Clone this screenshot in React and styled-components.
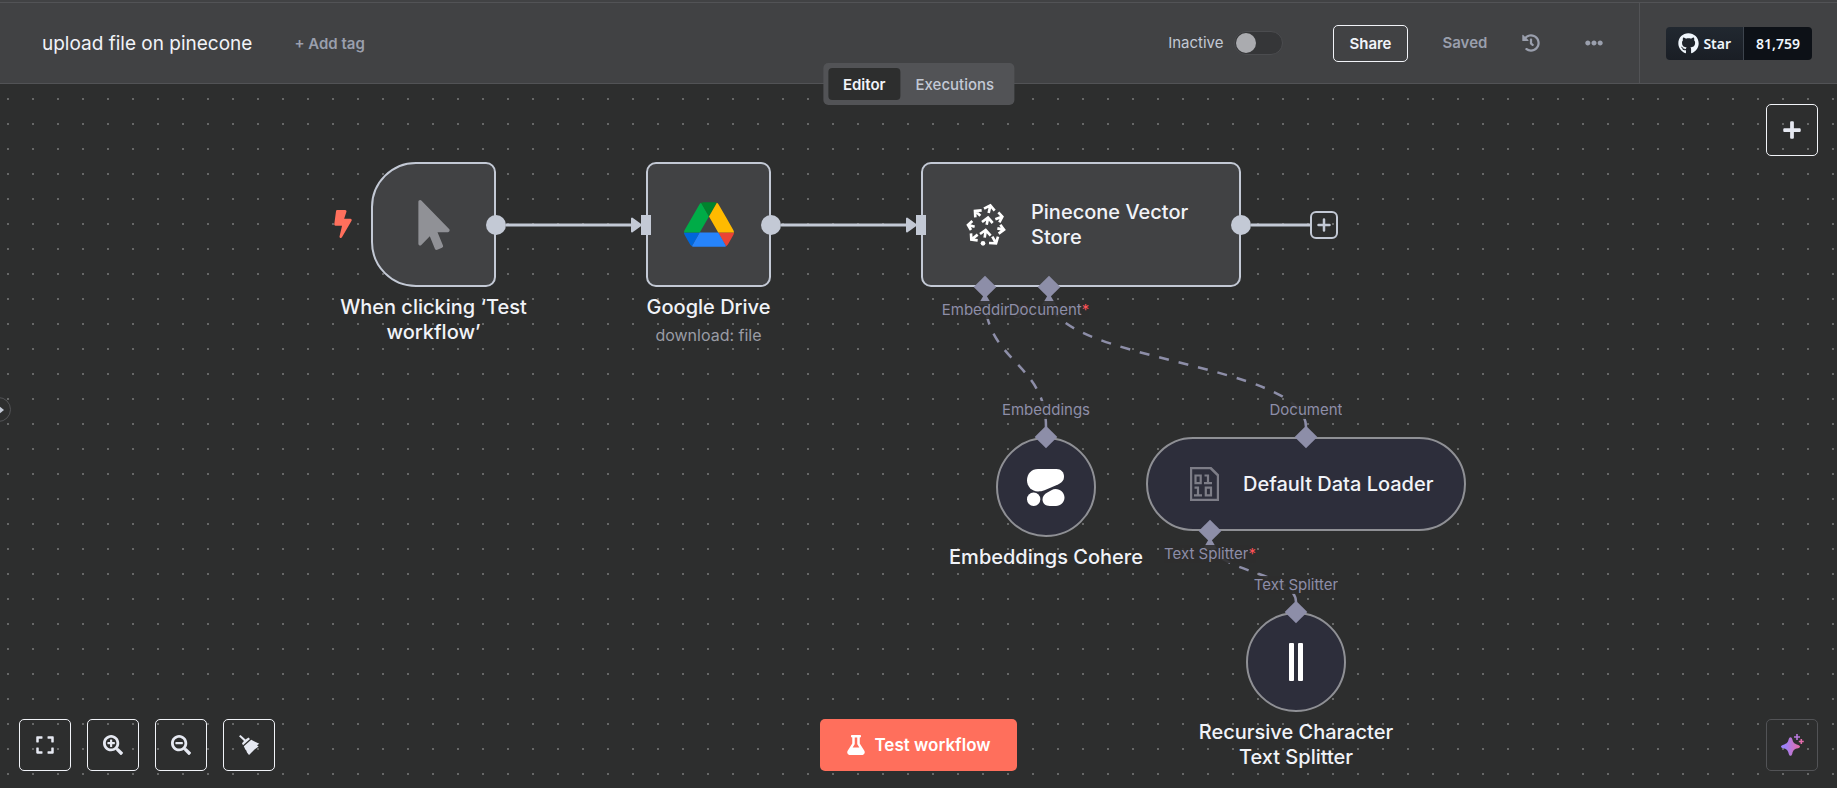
import React from "react";
import styled, { createGlobalStyle, css } from "styled-components";
import {
  FaBolt,
  FaEllipsisH,
  FaExpand,
  FaFlask,
  FaGithub,
  FaHistory,
  FaMousePointer,
  FaPlus,
  FaSearchMinus,
  FaSearchPlus,
} from "react-icons/fa";

const color = {
  canvas: "#2d2e2e",
  surface: "#414244",
  line: "#525356",
  wire: "#c3c9d5",
  config: "#2d2e3b",
  configBorder: "#8f9095",
  configWire: "#8d8ea8",
  text: "#f1f3f8",
  muted: "#9a9fad",
  coral: "#ff6f5c",
};

const GlobalStyle = createGlobalStyle`
  * { box-sizing: border-box; }
  body {
    margin: 0;
    background: ${color.canvas};
    color: ${color.text};
    font-family: Inter, "Liberation Sans", sans-serif;
  }
  button, input { font: inherit; color: inherit; }
  button { margin: 0; padding: 0; border: 0; background: none; cursor: pointer; }
  svg { flex-shrink: 0; }
`;

const Page = styled.div`
  display: flex;
  flex-direction: column;
  min-height: 100vh;
`;

/* ---------- header ---------- */

const Header = styled.header`
  position: relative;
  z-index: 2;
  padding-top: 2px;
  background: ${color.surface};
`;

const HeaderBar = styled.div`
  display: flex;
  align-items: stretch;
  min-height: 82px;
  border-top: 1px solid ${color.line};
  border-bottom: 1px solid ${color.line};
`;

const WorkflowInfo = styled.div`
  display: flex;
  flex: 1;
  align-items: center;
  gap: 42px;
  padding-top: 2px;
  padding-left: 42px;
`;

const Title = styled.h1`
  margin: 0;
  font-size: 19px;
  font-weight: 400;
  line-height: 24px;
`;

const QuietButton = styled.button`
  display: flex;
  align-items: center;
  color: ${color.muted};
  font-size: 15px;
  font-weight: 600;
  line-height: 20px;
`;

const Actions = styled.div`
  display: flex;
  align-items: center;
  gap: 35px;
  padding-right: 36px;
`;

const Activation = styled.label`
  display: flex;
  align-items: center;
  gap: 11px;
  margin-right: 15px;
  color: #c3c9d5;
  font-size: 15px;
  line-height: 20px;
`;

const Switch = styled.input`
  appearance: none;
  display: flex;
  align-items: center;
  width: 49px;
  height: 24px;
  margin: 0;
  padding: 1px;
  border: 1px solid #4b4c4f;
  border-radius: 12px;
  background: #353638;

  &::before {
    content: "";
    width: 20px;
    height: 20px;
    border-radius: 50%;
    background: #aaabaf;
  }
  &:checked { justify-content: flex-end; }
`;

const ShareButton = styled.button`
  height: 37px;
  padding: 0 15px;
  border: 1px solid ${color.text};
  border-radius: 5px;
  font-size: 15px;
  font-weight: 600;
`;

const Saved = styled.span`
  color: ${color.muted};
  font-size: 15px;
  font-weight: 600;
  line-height: 20px;
`;

const MoreButton = styled(QuietButton)`
  margin-left: 10px;
`;

const GithubArea = styled.div`
  display: flex;
  align-items: center;
  padding: 0 25px 0 26px;
  border-left: 1px solid ${color.line};
`;

const GithubLink = styled.a`
  display: flex;
  align-items: center;
  gap: 4px;
  height: 33px;
  padding: 0 12px;
  background: linear-gradient(#212830, #1a1e25);
  border-right: 1px solid #3d444d;
  border-radius: 4px 0 0 4px;
  color: #f0f6fc;
  font-family: "Noto Sans", sans-serif;
  font-size: 14px;
  font-weight: 600;
  text-decoration: none;
`;

const GithubCount = styled(GithubLink)`
  background: #0d1117;
  border-right: 0;
  border-radius: 0 4px 4px 0;
`;

const ViewTabs = styled.nav`
  position: absolute;
  top: 63px;
  left: 50%;
  display: flex;
  padding: 5px;
  border-radius: 5px;
  background: ${color.line};
  transform: translateX(-50%);
`;

const ViewTab = styled.button`
  height: 32px;
  padding: 0 15px;
  border-radius: 4px;
  background: ${(p) => (p.$active ? color.canvas : "transparent")};
  color: ${(p) => (p.$active ? color.text : color.wire)};
  font-size: 15px;
  font-weight: ${(p) => (p.$active ? 600 : 500)};
`;

/* ---------- canvas ---------- */

const Canvas = styled.main`
  position: relative;
  flex: 1;
  min-height: 704px;
  overflow: hidden;
  background-color: ${color.canvas};
  background-image: radial-gradient(circle at 1px 1px, #666767 1px, transparent 1px);
  background-size: 25px 25px;
  background-position: 7px 14px;
`;

const Wires = styled.svg`
  position: absolute;
  top: 0;
  left: 0;
  width: 100%;
  height: 100%;
  fill: none;
`;

const NodeSlot = styled.article`
  position: absolute;
  left: ${(p) => p.$x}px;
  top: ${(p) => p.$y}px;
  display: flex;
  flex-direction: column;
  align-items: center;
  width: ${(p) => p.$w}px;
`;

const nodeShapes = {
  trigger: css`
    height: 125px;
    border-radius: 45px 10px 10px 45px;
  `,
  regular: css`
    height: 125px;
    border-radius: 10px;
  `,
  circle: css`
    height: 100px;
    border-radius: 50%;
  `,
  pill: css`
    height: 94px;
    border-radius: 47px;
  `,
};

const NodeBox = styled.div`
  display: flex;
  align-items: center;
  justify-content: ${(p) => (p.$wide ? "flex-start" : "center")};
  gap: 24px;
  width: 100%;
  padding: ${(p) => (p.$wide ? "0 16px 0 42px" : "0")};
  border: 2px solid ${(p) => (p.$config ? color.configBorder : color.wire)};
  background: ${(p) => (p.$config ? color.config : color.surface)};
  ${(p) => nodeShapes[p.$shape]}
`;

const NodeName = styled.h2`
  margin: 0;
  font-size: 20px;
  font-weight: 500;
  line-height: 25px;
`;

const Caption = styled.div`
  width: 200px;
  margin-top: 8px;
  text-align: center;
`;

const Subtitle = styled.p`
  margin: 5px 0 0;
  color: #9a9ca5;
  font-size: 16px;
  line-height: 20px;
`;

const TriggerMark = styled.span`
  position: absolute;
  top: 48px;
  left: -42px;
  color: ${color.coral};
`;

const MainOutput = styled.span`
  position: absolute;
  top: 53px;
  right: -10px;
  width: 20px;
  height: 20px;
  border-radius: 50%;
  background: ${color.wire};
`;

const MainInput = styled.span`
  position: absolute;
  top: 53px;
  left: -5px;
  width: 10px;
  height: 20px;
  background: ${color.wire};
`;

const AddAfter = styled.button`
  position: absolute;
  top: 49px;
  left: 389px;
  display: grid;
  place-items: center;
  width: 28px;
  height: 28px;
  border: 2px solid ${color.wire};
  border-radius: 6px;
  color: ${color.wire};
`;

const Port = styled.span`
  position: absolute;
  left: ${(p) => p.$x}px;
  top: ${(p) => p.$y}px;
  display: flex;
  justify-content: center;
  width: 0;

  &::before {
    content: "";
    position: absolute;
    top: -8px;
    left: -8px;
    width: 16px;
    height: 16px;
    background: ${color.configWire};
    transform: rotate(45deg);
  }
`;

const PortLabel = styled.span`
  position: absolute;
  top: ${(p) => (p.$above ? -36 : 14)}px;
  display: flex;
  background: rgba(45, 46, 46, 0.9);
  color: ${color.configWire};
  font-size: 15px;
  line-height: 18px;
  white-space: nowrap;
`;

const PortName = styled.span`
  max-width: ${(p) => (p.$narrow ? "79px" : "none")};
  overflow: hidden;
`;

const Required = styled.span`
  color: #ff5257;
`;

/* ---------- canvas controls ---------- */

const ControlBar = styled.div`
  position: absolute;
  right: 19px;
  bottom: 17px;
  left: 19px;
  display: grid;
  grid-template-columns: 1fr auto 1fr;
  align-items: center;
`;

const ButtonRow = styled.div`
  display: flex;
  gap: 16px;
  justify-content: ${(p) => (p.$end ? "flex-end" : "flex-start")};
`;

const SquareButton = styled.button`
  display: grid;
  place-items: center;
  width: 52px;
  height: 52px;
  border: 1px solid ${(p) => (p.$faint ? color.line : color.text)};
  border-radius: 5px;
  color: #e6e9f2;
`;

const AddNode = styled.div`
  position: absolute;
  top: 20px;
  right: 19px;
`;

const RunButton = styled.button`
  display: flex;
  align-items: center;
  justify-content: center;
  gap: 8px;
  height: 52px;
  padding: 0 26px;
  border-radius: 5px;
  background: ${color.coral};
  color: #fff;
  font-size: 17px;
  font-weight: 600;
`;

const PanelToggle = styled.button`
  position: absolute;
  top: 313px;
  left: -14px;
  display: flex;
  align-items: center;
  justify-content: center;
  width: 25px;
  height: 25px;
  padding-left: 4px;
  border: 1px solid ${color.line};
  border-radius: 50%;
  color: ${color.wire};
`;

/* ---------- drawings ---------- */

const DriveLogo = () => (
  <svg width="50" height="45" viewBox="0 0 87.3 78" aria-hidden="true">
    <path fill="#0066da" d="m6.6 66.85 3.85 6.65c.8 1.4 1.95 2.5 3.3 3.3l13.75-23.8h-27.5c0 1.55.4 3.1 1.2 4.5z" />
    <path fill="#00ac47" d="m43.65 25-13.75-23.8c-1.35.8-2.5 1.9-3.3 3.3l-25.4 44a9.06 9.06 0 0 0-1.2 4.5h27.5z" />
    <path fill="#ea4335" d="m73.55 76.8c1.35-.8 2.5-1.9 3.3-3.3l1.6-2.75 7.65-13.25c.8-1.4 1.2-2.95 1.2-4.5h-27.502l5.852 11.5z" />
    <path fill="#00832d" d="m43.65 25 13.75-23.8c-1.35-.8-2.9-1.2-4.5-1.2h-18.5c-1.6 0-3.15.45-4.5 1.2z" />
    <path fill="#2684fc" d="m59.8 53h-32.3l-13.75 23.8c1.35.8 2.9 1.2 4.5 1.2h50.8c1.6 0 3.15-.45 4.5-1.2z" />
    <path fill="#ffba00" d="m73.4 26.5-12.7-22c-.8-1.4-1.95-2.5-3.3-3.3l-13.75 23.8 16.15 28h27.45c0-1.55-.4-3.1-1.2-4.5z" />
  </svg>
);

const PineconeLogo = () => (
  <svg width="42" height="44" viewBox="0 0 126 132" fill="none" stroke="#fff" strokeWidth="8" aria-hidden="true">
    <path d="M71 30 76 8M57 17 76 7 89 23" />
    <path d="M65 65 69 46M51 57 69 44 83 60" />
    <path d="M59 104 62 84M45 93 62 81 77 98" />
    <path d="M46 38 31 24M31 43 30 24 50 22" />
    <path d="M29 71 10 66M22 54 9 66 18 81" />
    <path d="M38 95 20 109M18 91 19 110 38 112" />
    <path d="M91 49 111 41M100 28 112 41 103 58" />
    <path d="M97 76 116 80M106 65 117 80 101 92" />
    <path d="M82 101 92 119M72 120 93 121 99 101" />
    <circle cx="54" cy="121" r="7" fill="#fff" stroke="none" />
  </svg>
);

const CohereLogo = () => (
  <svg width="38" height="37" viewBox="0 0 38 37" fill="#fff" aria-hidden="true">
    <path d="M11 0H29.5C34 0 37 3.2 37 7.6c0 3.9-2.4 6.2-6 7.9L17.5 21.3c-2.2.9-4.3 1.1-6.5 1.1C4.7 22.4 0 17.6 0 11.2S4.7 0 11 0z" />
    <path d="M28.6 20c5 0 8.9 3.8 8.9 8.5S33.7 37 29 37h-6.2c-4.3 0-7.3-2.8-7.3-6.5 0-3.2 1.9-5.6 4.9-7.1l4-2.2c1.4-.8 2.7-1.2 4.2-1.2z" />
    <rect x="0" y="23.6" width="13.3" height="13.4" rx="6.5" />
  </svg>
);

const BinaryFile = () => (
  <svg width="29" height="34" viewBox="0 0 29 34" fill="none" stroke="#7d7d87" strokeWidth="2.2" aria-hidden="true">
    <path d="M1.1 1.1H21L27.9 8V32.9H1.1zM20.5 1.1 27.9 8.5" />
    <path d="M5.5 8.5h5.2v7.7H5.5zM15.8 20.7H21v7.7h-5.2zM14.5 8.5H18v7.7M14 16.2h8M4.5 20.7H8v7.7M4 28.4h8" />
  </svg>
);

const SplitterBars = () => (
  <svg width="14" height="38" viewBox="0 0 14 38" fill="#fff" aria-hidden="true">
    <rect width="5" height="38" rx="1" />
    <rect x="9" width="5" height="38" rx="1" />
  </svg>
);

const Broom = () => (
  <svg width="21" height="20" viewBox="0 0 21 20" fill="currentColor" aria-hidden="true">
    <path d="M0 1.3 1.5 0 6.500 4.500 9.500 2.500 11 4 4 10.300 3 8.300 5 6z" />
    <path d="M4.800 11.200 12.200 4.800 20.300 8.800 18 10.200 19.600 11.500 15.500 14.500 10 20 8 17.500 7.300 15.500 6.300 14.500z" />
  </svg>
);

const Sparkles = () => (
  <svg width="23" height="22" viewBox="0 0 23 22" aria-hidden="true">
    <defs>
      <linearGradient id="sparkle" x1="0" y1="0" x2="1" y2="0">
        <stop offset="0.2" stopColor="#9b82fb" />
        <stop offset="1" stopColor="#e86aa4" />
      </linearGradient>
    </defs>
    <path
      fill="url(#sparkle)"
      d="M9.5 3.2c.8 0 1.5.9 1.8 2.1.8 3 1.5 4.2 4.5 5.1 2 .5 3.2 1.2 3.2 2.1s-1.2 1.6-3.2 2.1c-3 .9-3.700 2.100-4.500 5.100-.3 1.200-1 2.100-1.800 2.100s-1.500-.9-1.800-2.100c-.8-3-1.500-4.200-4.500-5.100C1.200 14.100 0 13.400 0 12.500s1.200-1.600 3.200-2.100c3-.9 3.700-2.100 4.500-5.100.3-1.200 1-2.100 1.800-2.100z"
    />
    <path d="M16 0v6M13 3h6" stroke="#b778dc" strokeWidth="1.6" />
    <path d="M20.3 5v5M17.8 7.500h5" stroke="#e36cab" strokeWidth="1.6" />
  </svg>
);

const Chevron = () => (
  <svg width="6" height="8" viewBox="0 0 6 8" fill="currentColor" aria-hidden="true">
    <path d="M1 0 6 4 1 8z" />
  </svg>
);

const PlusMark = () => (
  <svg width="14" height="14" viewBox="0 0 14 14" stroke="currentColor" strokeWidth="2.5" strokeLinecap="round" aria-hidden="true">
    <path d="M7 1.500v11M1.500 7h11" />
  </svg>
);

const Connections = () => (
  <Wires aria-hidden="true">
    <g stroke={color.wire} strokeWidth="3">
      <path d="M506 141H633" />
      <path d="M781 141H908" />
      <path d="M1251 141H1310" />
    </g>
    <g fill={color.wire} stroke={color.wire} strokeWidth="2" strokeLinejoin="round">
      <path d="M632 134.500V147.500L641 141z" />
      <path d="M907 134.500V147.500L916 141z" />
    </g>
    <g stroke={color.configWire} strokeWidth="2.5" strokeDasharray="10 10">
      <path d="M1046 343C1046 278 985 278 985 213" />
      <path d="M1306 343C1306 278 1049 278 1049 213" />
      <path d="M1296 518C1296 488 1210 488 1210 457" />
    </g>
    <g fill={color.configWire}>
      <path d="M985 209 978 221H992z" />
      <path d="M1049 209 1042 221H1056z" />
      <path d="M1210 453 1203 465H1217z" />
    </g>
  </Wires>
);

function ConfigPort({ x, y, label, above, required, narrow }) {
  return (
    <Port $x={x} $y={y}>
      <PortLabel $above={above}>
        <PortName $narrow={narrow}>{label}</PortName>
        {required && <Required>*</Required>}
      </PortLabel>
    </Port>
  );
}

export default function App() {
  return (
    <Page>
      <GlobalStyle />
      <Header>
        <HeaderBar>
          <WorkflowInfo>
            <Title>upload file on pinecone</Title>
            <QuietButton type="button">+ Add tag</QuietButton>
          </WorkflowInfo>
          <Actions>
            <Activation>
              Inactive
              <Switch type="checkbox" role="switch" />
            </Activation>
            <ShareButton type="button">Share</ShareButton>
            <Saved>Saved</Saved>
            <QuietButton type="button" aria-label="Workflow history">
              <FaHistory size={18} />
            </QuietButton>
            <MoreButton type="button" aria-label="More options">
              <FaEllipsisH size={18} />
            </MoreButton>
          </Actions>
          <GithubArea>
            <GithubLink href="#star">
              <FaGithub size={21} aria-hidden="true" />
              Star
            </GithubLink>
            <GithubCount href="#stargazers">81,759</GithubCount>
          </GithubArea>
        </HeaderBar>
        <ViewTabs aria-label="Workflow views">
          <ViewTab type="button" $active aria-current="page">Editor</ViewTab>
          <ViewTab type="button">Executions</ViewTab>
        </ViewTabs>
      </Header>

      <Canvas>
        <Connections />

        <NodeSlot $x={371} $y={78} $w={125}>
          <TriggerMark><FaBolt size={28} /></TriggerMark>
          <NodeBox $shape="trigger">
            <FaMousePointer size={50} color="#909196" />
          </NodeBox>
          <MainOutput />
          <Caption>
            <NodeName>When clicking ‘Test workflow’</NodeName>
          </Caption>
        </NodeSlot>

        <NodeSlot $x={646} $y={78} $w={125}>
          <NodeBox $shape="regular"><DriveLogo /></NodeBox>
          <MainInput />
          <MainOutput />
          <Caption>
            <NodeName>Google Drive</NodeName>
            <Subtitle>download: file</Subtitle>
          </Caption>
        </NodeSlot>

        <NodeSlot $x={921} $y={78} $w={320}>
          <NodeBox $shape="regular" $wide>
            <PineconeLogo />
            <NodeName>Pinecone Vector Store</NodeName>
          </NodeBox>
          <MainInput />
          <MainOutput />
          <AddAfter type="button" aria-label="Add next node"><PlusMark /></AddAfter>
          <ConfigPort x={64} y={125} label="Embeddings" required narrow />
          <ConfigPort x={128} y={125} label="Document" required />
        </NodeSlot>

        <NodeSlot $x={996} $y={353} $w={100}>
          <NodeBox $shape="circle" $config><CohereLogo /></NodeBox>
          <ConfigPort x={50} y={0} label="Embeddings" above />
          <Caption>
            <NodeName>Embeddings Cohere</NodeName>
          </Caption>
        </NodeSlot>

        <NodeSlot $x={1146} $y={353} $w={320}>
          <NodeBox $shape="pill" $config $wide>
            <BinaryFile />
            <NodeName>Default Data Loader</NodeName>
          </NodeBox>
          <ConfigPort x={160} y={0} label="Document" above />
          <ConfigPort x={64} y={94} label="Text Splitter" required />
        </NodeSlot>

        <NodeSlot $x={1246} $y={528} $w={100}>
          <NodeBox $shape="circle" $config><SplitterBars /></NodeBox>
          <ConfigPort x={50} y={0} label="Text Splitter" above />
          <Caption>
            <NodeName>Recursive Character Text Splitter</NodeName>
          </Caption>
        </NodeSlot>

        <PanelToggle type="button" aria-label="Expand sidebar"><Chevron /></PanelToggle>

        <AddNode>
          <SquareButton type="button" aria-label="Add node"><FaPlus size={20} /></SquareButton>
        </AddNode>

        <ControlBar>
          <ButtonRow>
            <SquareButton type="button" aria-label="Fit to view"><FaExpand size={20} /></SquareButton>
            <SquareButton type="button" aria-label="Zoom in"><FaSearchPlus size={20} /></SquareButton>
            <SquareButton type="button" aria-label="Zoom out"><FaSearchMinus size={20} /></SquareButton>
            <SquareButton type="button" aria-label="Tidy up"><Broom /></SquareButton>
          </ButtonRow>
          <RunButton type="button">
            <FaFlask size={20} aria-hidden="true" />
            Test workflow
          </RunButton>
          <ButtonRow $end>
            <SquareButton type="button" $faint aria-label="Ask assistant"><Sparkles /></SquareButton>
          </ButtonRow>
        </ControlBar>
      </Canvas>
    </Page>
  );
}
